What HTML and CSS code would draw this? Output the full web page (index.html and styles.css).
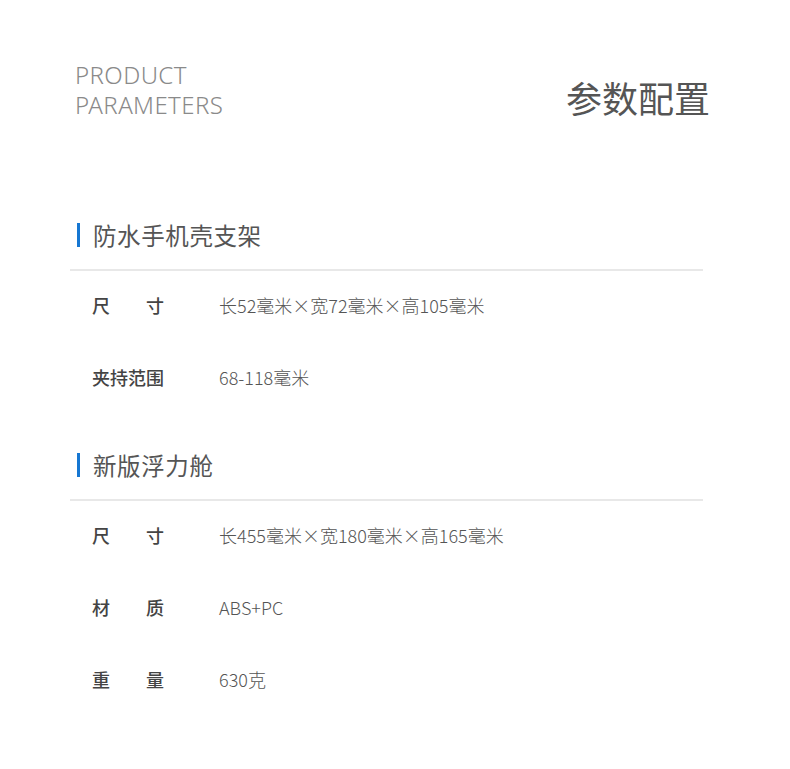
FILE: index.html
```html
<!DOCTYPE html>
<html lang="zh">
<head>
<meta charset="utf-8">
<link rel="stylesheet" href="styles.css">
</head>
<body>
<div class="page">
  <header class="hero">
    <div class="en">PRODUCT<br>PARAMETERS</div>
    <h1 class="cn">参数配置</h1>
  </header>

  <section class="block first">
    <h2 class="title"><span class="bar"></span>防水手机壳支架</h2>
    <div class="rule"></div>
    <div class="row"><span class="label">尺　　寸</span><span class="value">长52毫米×宽72毫米×高105毫米</span></div>
    <div class="row"><span class="label">夹持范围</span><span class="value">68-118毫米</span></div>
  </section>

  <section class="block">
    <h2 class="title"><span class="bar"></span>新版浮力舱</h2>
    <div class="rule"></div>
    <div class="row"><span class="label">尺　　寸</span><span class="value">长455毫米×宽180毫米×高165毫米</span></div>
    <div class="row"><span class="label">材　　质</span><span class="value">ABS+PC</span></div>
    <div class="row"><span class="label">重　　量</span><span class="value">630克</span></div>
  </section>
</div>
</body>
</html>
```

FILE: styles.css
```css
html, body {
  margin: 0;
  padding: 0;
  background: #ffffff;
}
body {
  font-family: "Noto Sans CJK SC", "Noto Sans", sans-serif;
  color: #555;
}
.page {
  width: 790px;
  height: 769px;
  box-sizing: border-box;
  padding: 0 70px 0 70px;
  overflow: hidden;
}
.hero {
  display: flex;
  justify-content: space-between;
  align-items: flex-start;
  padding: 60px 10px 0 5px;
  height: 160px;
  box-sizing: border-box;
}
.en {
  font-family: "Noto Sans", "Liberation Sans", sans-serif;
  font-weight: 300;
  font-size: 24px;
  line-height: 30px;
  color: #8a8a8a;
  letter-spacing: 0.4px;
}
.cn {
  margin: 12px 0 0 0;
  font-weight: 400;
  font-size: 36px;
  line-height: 50px;
  color: #555;
  letter-spacing: 0;
}
.block.first {
  margin-top: 58px;
}
.block {
  margin-top: 35px;
}
.title {
  display: flex;
  align-items: center;
  margin: 0 0 0 7px;
  font-weight: 400;
  font-size: 23.5px;
  line-height: 34px;
  color: #555;
  letter-spacing: 0.6px;
}
.bar {
  width: 3px;
  height: 24px;
  background: #1677d2;
  margin-right: 13px;
}
.rule {
  height: 2px;
  background: #e8e8e8;
  margin-top: 17px;
  margin-right: 17px;
  margin-bottom: -2px;
}
.row {
  display: flex;
  align-items: center;
  height: 72px;
  padding-left: 22px;
}
.label {
  width: 127px;
  font-weight: 500;
  font-size: 18px;
  color: #444;
}
.value {
  font-weight: 300;
  font-size: 18px;
  color: #555;
}
```
